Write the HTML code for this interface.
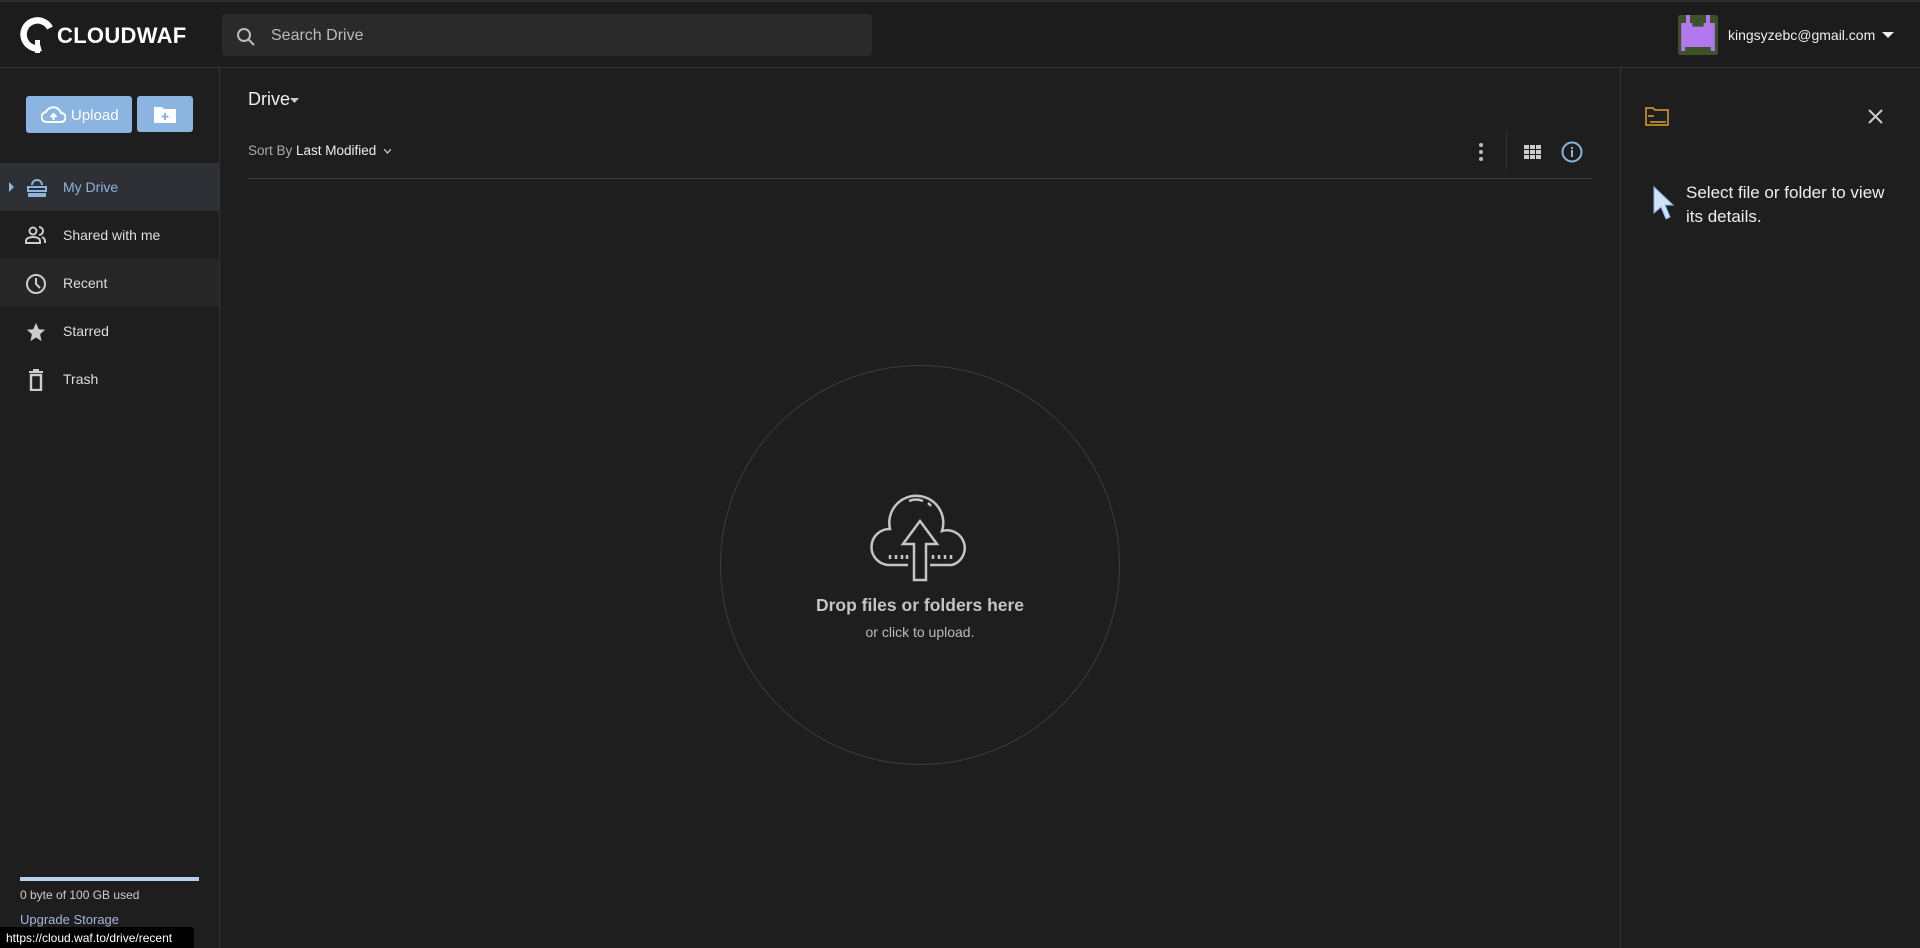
<!DOCTYPE html>
<html><head><meta charset="utf-8"><style>
*{box-sizing:border-box;margin:0;padding:0}
body{width:1920px;height:948px;background:#1e1e1e;font-family:"Liberation Sans",sans-serif;color:#e0e0e0;position:relative;overflow:hidden}
.a{position:absolute}
.hdr{left:0;top:0;width:1920px;height:68px;border-top:2px solid #2e2e2e;border-bottom:1px solid #333;background:#1c1c1c}
.search{left:222px;top:14px;width:650px;height:42px;background:#2a2a2a;border-radius:4px}
.nav{left:0;width:219px;height:48px}
.nav span{position:absolute;left:63px;top:16px;font-size:14px;color:#ddd}
.nav svg{position:absolute;left:25px;top:14px}
</style></head><body>
<div class="a hdr"></div>
<svg class="a" style="left:19px;top:16px" width="38" height="38" viewBox="0 0 38 38"><path d="M31 12 A14 14 0 1 0 22 32" fill="none" stroke="#fff" stroke-width="6.5"/><rect x="16" y="24" width="5" height="13" fill="#fff"/></svg>
<div class="a" style="left:57px;top:23px;font-size:22px;font-weight:bold;color:#fff;letter-spacing:0.3px">CLOUDWAF</div>
<div class="a search"></div>
<svg class="a" style="left:236px;top:27px" width="20" height="20" viewBox="0 0 20 20"><circle cx="8" cy="8" r="6" fill="none" stroke="#bbb" stroke-width="2"/><path d="M12.5 12.5L18 18" stroke="#bbb" stroke-width="2"/></svg>
<div class="a" style="left:271px;top:27px;font-size:16px;color:#bbb">Search Drive</div>
<svg class="a" style="left:1678px;top:15px" width="40" height="40" viewBox="0 0 10 10"><rect width="10" height="10" rx="0.6" fill="#3d5229"/><path d="M2 0h1v2h4v-2h1v2h1.2v7h-1v-1h-6.4v1h-1v-7h1.2z" fill="#b078ec"/><rect x="3.6" y="2" width="2.8" height="0.9" fill="#3d5229"/></svg>
<div class="a" style="left:1728px;top:27px;font-size:14px;color:#eee">kingsyzebc@gmail.com</div>
<svg class="a" style="left:1882px;top:32px" width="12" height="7"><path d="M0 0h12L6 6z" fill="#eee"/></svg>
<div class="a" style="left:219px;top:68px;width:1px;height:880px;background:#333"></div>
<div class="a" style="left:26px;top:96px;width:106px;height:37px;background:#8cb4e0;border-radius:3px"></div>
<svg class="a" style="left:41px;top:105px" width="25" height="19" viewBox="0 0 25 19"><path d="M6 17A5 5 0 0 1 5 7 8 8 0 0 1 20 8 4.5 4.5 0 0 1 20 17Z" fill="none" stroke="#fff" stroke-width="2"/><path d="M12.5 15V9M9.5 12l3-3 3 3" stroke="#fff" stroke-width="2" fill="none"/></svg>
<div class="a" style="left:71px;top:107px;font-size:15px;color:#fff">Upload</div>
<div class="a" style="left:137px;top:96px;width:56px;height:36px;background:#8cb4e0;border-radius:3px"></div>
<svg class="a" style="left:154px;top:106px" width="22" height="17" viewBox="0 0 22 17"><path d="M0 1h8l2 2h12v14H0z" fill="#fff"/><path d="M11 7v7M7.5 10.5h7" stroke="#8cb4e0" stroke-width="2"/></svg>
<div class="a nav" style="top:163px;background:#2e3035"><svg width="20" height="22" viewBox="0 0 20 22" style="left:27px;top:13px"><path d="M5 9a5 5 0 0 1 10 0" fill="none" stroke="#8cb4e0" stroke-width="2"/><rect x="1" y="11" width="18" height="4" fill="none" stroke="#8cb4e0" stroke-width="2"/><rect x="1" y="17" width="18" height="4" fill="#8cb4e0"/></svg><span style="color:#8cb4e0">My Drive</span></div>
<svg class="a" style="left:9px;top:182px" width="6" height="10"><path d="M0 0l5 5-5 5z" fill="#8cb4e0"/></svg>
<div class="a nav" style="top:211px"><svg width="22" height="20" viewBox="0 0 22 20"><circle cx="8" cy="6" r="3.5" fill="none" stroke="#ccc" stroke-width="2"/><path d="M1 18v-2c0-3 4-4 7-4s7 1 7 4v2z" fill="none" stroke="#ccc" stroke-width="2"/><path d="M14 2a4 4 0 0 1 0 8M17 12c2 1 3 2 3 4v2" fill="none" stroke="#ccc" stroke-width="2"/></svg><span>Shared with me</span></div>
<div class="a nav" style="top:259px;background:#262626"><svg width="22" height="22" viewBox="0 0 22 22"><circle cx="11" cy="11" r="9" fill="none" stroke="#ccc" stroke-width="2"/><path d="M11 5v6l4 4" fill="none" stroke="#ccc" stroke-width="2"/></svg><span>Recent</span></div>
<div class="a nav" style="top:307px"><svg width="22" height="22" viewBox="0 0 24 24"><path d="M12 2l3 7 7 .5-5.5 4.8L18 22l-6-4-6 4 1.5-7.7L2 9.5 9 9z" fill="#ccc"/></svg><span>Starred</span></div>
<div class="a nav" style="top:355px"><svg width="22" height="22" viewBox="0 0 22 22"><path d="M4 3h14M8 1h6" stroke="#ccc" stroke-width="2"/><rect x="6" y="6" width="10" height="15" fill="none" stroke="#ccc" stroke-width="2.4"/></svg><span>Trash</span></div>
<div class="a" style="left:20px;top:877px;width:179px;height:4px;background:#b7d0ec"></div>
<div class="a" style="left:20px;top:888px;font-size:12px;color:#ccc">0 byte of 100 GB used</div>
<div class="a" style="left:20px;top:912px;font-size:13px;color:#a7b3d8">Upgrade Storage</div>
<div class="a" style="left:0;top:927px;width:194px;height:21px;background:#000;border-radius:0 4px 0 0;font-size:12px;color:#fff;padding:4px 6px">https://cloud.waf.to/drive/recent</div>
<div class="a" style="left:248px;top:89px;font-size:18px;color:#eee">Drive</div>
<svg class="a" style="left:290px;top:98px" width="9" height="5"><path d="M0 0h9L4.5 5z" fill="#ccc"/></svg>
<div class="a" style="left:248px;top:143px;font-size:13.5px;color:#aaa">Sort By <span style="color:#eee">Last Modified</span></div>
<svg class="a" style="left:384px;top:149px" width="7" height="5"><path d="M0 0l3.5 4L7 0" fill="none" stroke="#ccc" stroke-width="1.3"/></svg>
<svg class="a" style="left:1477px;top:142px" width="8" height="20"><circle cx="4" cy="3" r="2" fill="#bbb"/><circle cx="4" cy="10" r="2" fill="#bbb"/><circle cx="4" cy="17" r="2" fill="#bbb"/></svg>
<div class="a" style="left:1506px;top:130px;width:1px;height:40px;background:#333"></div>
<svg class="a" style="left:1524px;top:145px" width="17" height="14"><g fill="#ccc"><rect x="0" y="0" width="5" height="4"/><rect x="6" y="0" width="5" height="4"/><rect x="12" y="0" width="5" height="4"/><rect x="0" y="5" width="5" height="4"/><rect x="6" y="5" width="5" height="4"/><rect x="12" y="5" width="5" height="4"/><rect x="0" y="10" width="5" height="4"/><rect x="6" y="10" width="5" height="4"/><rect x="12" y="10" width="5" height="4"/></g></svg>
<svg class="a" style="left:1561px;top:141px" width="22" height="22" viewBox="0 0 22 22"><circle cx="11" cy="11" r="9.5" fill="none" stroke="#8cb4e0" stroke-width="2"/><rect x="10" y="9" width="2" height="7" fill="#8cb4e0"/><rect x="10" y="6" width="2" height="2" fill="#8cb4e0"/></svg>
<div class="a" style="left:248px;top:178px;width:1344px;height:1px;background:#3a3a3a"></div>
<div class="a" style="left:720px;top:365px;width:400px;height:400px;border:1px solid #3c3c3c;border-radius:50%"></div>
<svg class="a" style="left:868px;top:489px" width="104" height="94" viewBox="0 0 104 94"><g fill="none" stroke="#c4c4c4" stroke-width="2.5"><path d="M40 76H21A18 18 0 0 1 22 40 A27 27 0 1 1 74 42 A17 17 0 0 1 84 76H62"/><path d="M41 12a18 18 0 0 1 14 0M60 14a18 18 0 0 1 3 3"/><path d="M46 91V55h-11l17-23 17 23h-11v36z"/><path d="M22 66v4M28 66v4M34 66v4M39 66v4M65 66v4M71 66v4M77 66v4M83 66v4"/></g></svg>
<div class="a" style="left:720px;top:595px;width:400px;text-align:center;font-size:17.5px;font-weight:bold;color:#c4c4c4">Drop files or folders here</div>
<div class="a" style="left:720px;top:624px;width:400px;text-align:center;font-size:14px;color:#bbb">or click to upload.</div>
<div class="a" style="left:1620px;top:68px;width:1px;height:880px;background:#333"></div>
<svg class="a" style="left:1645px;top:107px" width="24" height="19" viewBox="0 0 24 19"><path d="M1 1h7l2 2h13v15H1z" fill="none" stroke="#d9a030" stroke-width="1.5"/><path d="M3 9h6M5 15h16" stroke="#d9a030" stroke-width="1.5"/></svg>
<svg class="a" style="left:1868px;top:109px" width="15" height="15"><path d="M1 1l13 13M14 1L1 14" stroke="#ccc" stroke-width="2"/></svg>
<svg class="a" style="left:1653px;top:186px" width="22" height="36" viewBox="0 0 22 36"><path d="M1 1l19 18h-8l5 12-4 2-5-12-7 6z" fill="#cfe3fb" stroke="#8cb4e0" stroke-width="1"/></svg>
<div class="a" style="left:1686px;top:181px;font-size:17px;line-height:24px;color:#eee;width:205px">Select file or folder to view its details.</div>
</body></html>
